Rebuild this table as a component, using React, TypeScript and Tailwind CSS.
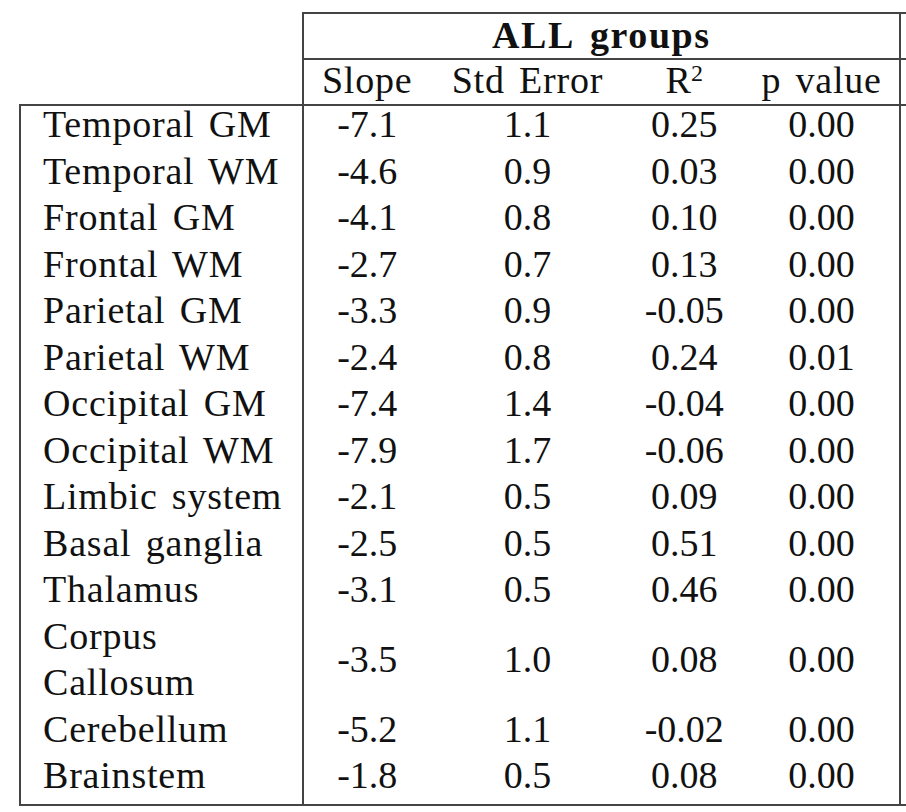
import React from "react";

const rows: [string[], string, string, string, string][] = [
  [["Temporal GM"], "-7.1", "1.1", "0.25", "0.00"],
  [["Temporal WM"], "-4.6", "0.9", "0.03", "0.00"],
  [["Frontal GM"], "-4.1", "0.8", "0.10", "0.00"],
  [["Frontal WM"], "-2.7", "0.7", "0.13", "0.00"],
  [["Parietal GM"], "-3.3", "0.9", "-0.05", "0.00"],
  [["Parietal WM"], "-2.4", "0.8", "0.24", "0.01"],
  [["Occipital GM"], "-7.4", "1.4", "-0.04", "0.00"],
  [["Occipital WM"], "-7.9", "1.7", "-0.06", "0.00"],
  [["Limbic system"], "-2.1", "0.5", "0.09", "0.00"],
  [["Basal ganglia"], "-2.5", "0.5", "0.51", "0.00"],
  [["Thalamus"], "-3.1", "0.5", "0.46", "0.00"],
  [["Corpus", "Callosum"], "-3.5", "1.0", "0.08", "0.00"],
  [["Cerebellum"], "-5.2", "1.1", "-0.02", "0.00"],
  [["Brainstem"], "-1.8", "0.5", "0.08", "0.00"],
];

const line = "border-[#444]";
const word = "tracking-[0.8px] [word-spacing:4px]";

export default function App() {
  return (
    <div className="w-[906px] h-[812px] overflow-hidden bg-white pt-[12px] pl-[19px] font-['Liberation_Serif',serif] text-[38px] text-[#111]">
      <table className="table-fixed border-collapse">
        <colgroup>
          <col className="w-[283px]" />
          <col className="w-[128px]" />
          <col className="w-[194px]" />
          <col className="w-[120px]" />
          <col className="w-[156px]" />
          <col className="w-[6px]" />
        </colgroup>
        <thead>
          <tr>
            <th className="p-0" />
            <th
              colSpan={4}
              className={`border-2 ${line} pt-[1px] pb-[2px] text-center font-bold leading-[41px] tracking-[1.6px] [word-spacing:6px]`}
            >
              ALL groups
            </th>
            <th className={`border-y-2 ${line} p-0`} />
          </tr>
          <tr>
            <th className={`border-b-2 ${line} p-0`} />
            <th className={`border-l-2 border-b-2 ${line} pt-0 pb-[4px] text-center font-normal leading-[40px] ${word}`}>
              Slope
            </th>
            <th className={`border-b-2 ${line} pt-0 pb-[4px] text-center font-normal leading-[40px] ${word}`}>
              Std Error
            </th>
            <th className={`border-b-2 ${line} pt-0 pb-[4px] text-center font-normal leading-[40px]`}>
              R<sup className="text-[24px]">2</sup>
            </th>
            <th className={`border-r-2 border-b-2 ${line} pt-0 pb-[4px] text-center font-normal leading-[40px] ${word}`}>
              p value
            </th>
            <th className={`border-b-2 ${line} p-0`} />
          </tr>
        </thead>
        <tbody>
          {rows.map((r, i) => {
            const last = i === rows.length - 1;
            const b = last ? "border-b-2" : "";
            const cell = `${b} ${line} pt-0 pb-[10.5px] text-center leading-[36px]`;
            return (
              <tr key={r[0].join(" ")}>
                <td className={`border-x-2 ${b} ${line} p-0 pl-[22px] leading-[36px] ${word}`}>
                  {r[0].map((t) => (
                    <div key={t} className="pb-[10.5px]">
                      {t}
                    </div>
                  ))}
                </td>
                <td className={cell}>{r[1]}</td>
                <td className={cell}>{r[2]}</td>
                <td className={cell}>{r[3]}</td>
                <td className={`border-r-2 ${cell}`}>{r[4]}</td>
                <td className={`${b} ${line} p-0`} />
              </tr>
            );
          })}
        </tbody>
      </table>
    </div>
  );
}
